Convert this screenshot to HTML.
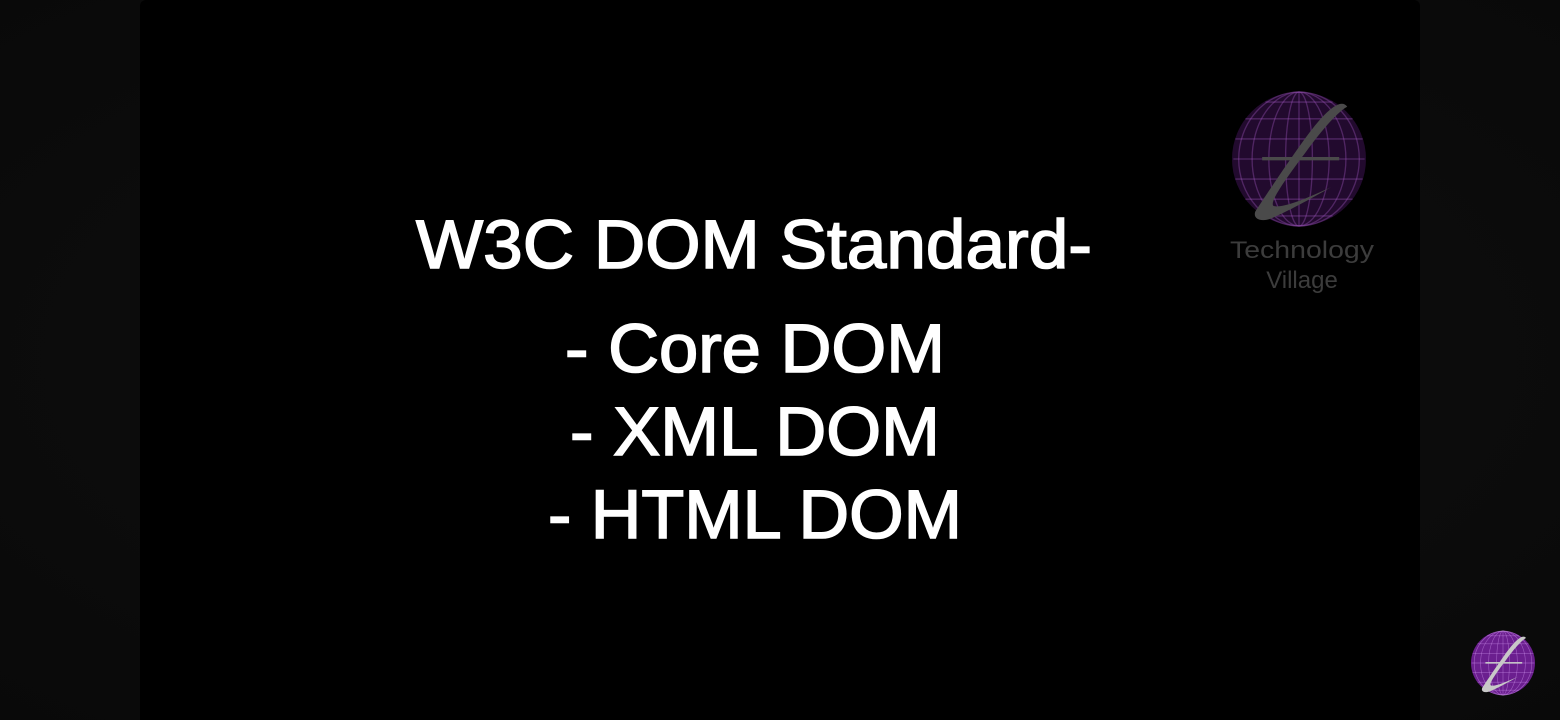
<!DOCTYPE html>
<html><head><meta charset="utf-8"><style>
html,body{margin:0;padding:0;width:1560px;height:720px;overflow:hidden;background:#0c0c0c;}
.bg{position:absolute;left:0;top:0;width:1560px;height:720px;background:radial-gradient(ellipse at center,#141414 0%,#0c0c0c 60%,#090909 100%);}
.vid{position:absolute;left:140px;top:0;width:1280px;height:720px;background:#000;border-radius:6px 6px 0 0;}
svg{position:absolute;left:0;top:0;}
</style></head><body>
<div class="bg"></div>
<div class="vid"></div>
<svg width="1560" height="720" viewBox="0 0 1560 720">
<defs>
<g id="globe">
 <circle cx="0" cy="0" r="1" fill="currentColor"/>
 <g fill="none" stroke="var(--g)" stroke-width="0.02">
  <ellipse cx="0" cy="0" rx="0.2" ry="1"/><ellipse cx="0" cy="0" rx="0.45" ry="1"/><ellipse cx="0" cy="0" rx="0.7" ry="1"/><ellipse cx="0" cy="0" rx="0.9" ry="1"/>
  <line x1="0" y1="-1" x2="0" y2="1"/>
  <line x1="-0.98" y1="0" x2="0.98" y2="0"/>
  <line x1="-0.95" y1="-0.3" x2="0.95" y2="-0.3"/><line x1="-0.95" y1="0.3" x2="0.95" y2="0.3"/>
  <line x1="-0.8" y1="-0.6" x2="0.8" y2="-0.6"/><line x1="-0.8" y1="0.6" x2="0.8" y2="0.6"/>
  <line x1="-0.5" y1="-0.85" x2="0.5" y2="-0.85"/><line x1="-0.5" y1="0.85" x2="0.5" y2="0.85"/>
 </g>
 <path d="M0.72,-0.78 C0.6,-0.95 0.3,-0.6 0.05,-0.25 C-0.2,0.1 -0.5,0.55 -0.65,0.78 C-0.7,0.9 -0.55,0.95 -0.4,0.88 C-0.1,0.75 0.25,0.55 0.48,0.42 C0.2,0.55 -0.25,0.75 -0.38,0.7 C-0.45,0.65 -0.2,0.3 0.1,-0.1 C0.35,-0.45 0.6,-0.72 0.72,-0.78 Z" fill="var(--t)"/>
 <rect x="-0.55" y="-0.03" width="1.15" height="0.05" fill="var(--t)"/>
</g>
</defs>
<g transform="translate(1299,159) scale(67)" style="color:#220a2e;--t:#4a4a4a;--g:rgba(150,80,180,0.4)"><use href="#globe"/></g>
<g transform="translate(1503,663) scale(32)" style="color:#6b1f8f;--t:#c8c8c8;--g:rgba(210,150,240,0.5)"><use href="#globe"/></g>
<g font-family="Liberation Sans, sans-serif" fill="#fff" stroke="#fff" stroke-width="1.6" font-size="69" text-anchor="start">
<text x="416" y="268" textLength="676" lengthAdjust="spacingAndGlyphs">W3C DOM Standard-</text>
<text x="565" y="372" textLength="380" lengthAdjust="spacingAndGlyphs">- Core DOM</text>
<text x="570" y="455" textLength="370" lengthAdjust="spacingAndGlyphs">- XML DOM</text>
<text x="548" y="538" textLength="414" lengthAdjust="spacingAndGlyphs">- HTML DOM</text>
</g>
<g font-family="Liberation Sans, sans-serif" fill="#3c3c3c" font-size="24" text-anchor="middle">
<text x="1302" y="258" textLength="144" lengthAdjust="spacingAndGlyphs">Technology</text>
<text x="1302" y="288">Village</text>
</g>
</svg>
</body></html>
